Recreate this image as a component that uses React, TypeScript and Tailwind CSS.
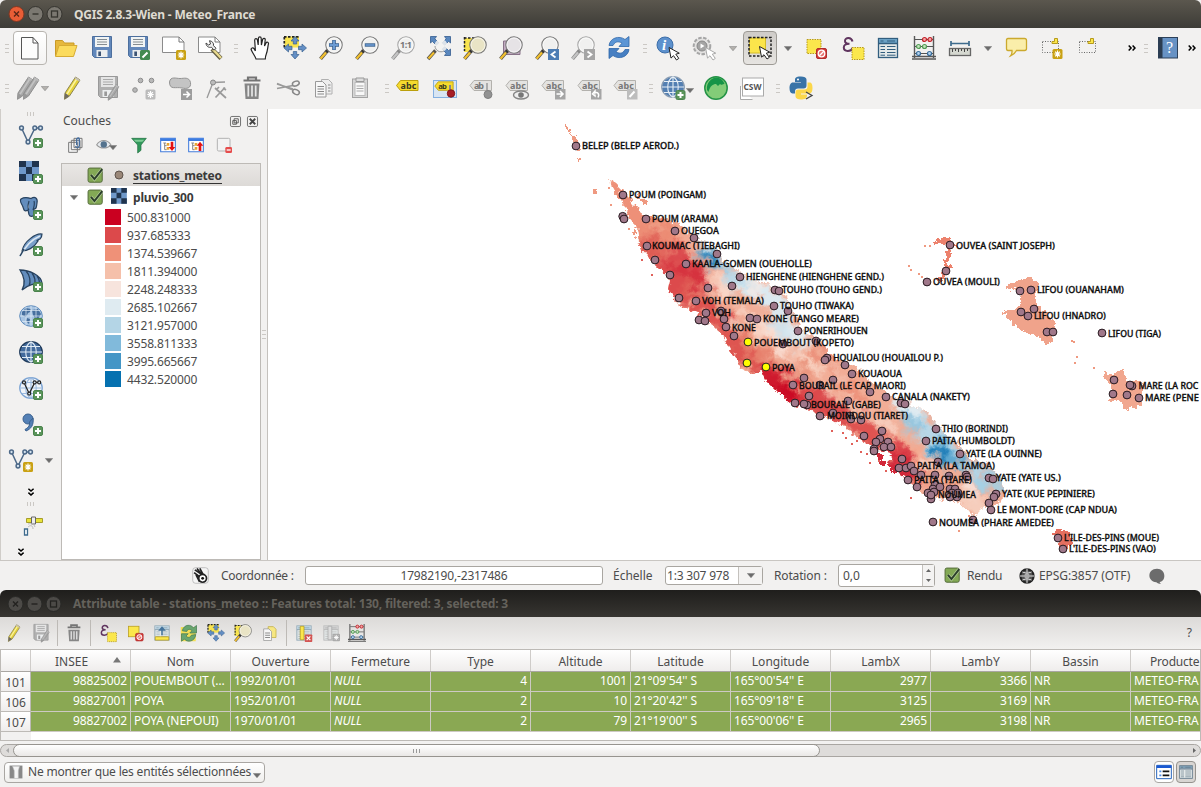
import React from "react";

type Kids = { children?: React.ReactNode };

function Icon({ children, size = 24 }: Kids & { size?: number }) {
  return (
    <svg width={size} height={size} viewBox="0 0 24 24" fill="none" className="block shrink-0 overflow-visible">
      {children}
    </svg>
  );
}

function Cell({ w = "w-9", children }: Kids & { w?: string }) {
  return <div className={`flex h-full shrink-0 items-center justify-center ${w}`}>{children}</div>;
}

function Grip() {
  return (
    <svg width="4" height="9" className="block shrink-0">
      <path d="M0 .5h4M0 4.5h4M0 8.5h4" stroke="#cbc8c4" />
    </svg>
  );
}
function VGrip() {
  return (
    <svg width="8" height="4" className="block shrink-0">
      <path d="M.5 0v4M3.5 0v4M6.5 0v4" stroke="#cbc8c4" />
    </svg>
  );
}
function Down({ c = "#6b6b6b" }: { c?: string }) {
  return (
    <svg width="8" height="5" viewBox="0 0 8 5" className="block shrink-0">
      <path d="M0.3 .4h7.4L4 4.8z" fill={c} stroke="#777" strokeWidth=".5" />
    </svg>
  );
}
function More({ down = false }: { down?: boolean }) {
  return (
    <svg width="8" height="8" viewBox="0 0 8 8" className={down ? "block rotate-90" : "block"}>
      <path d="M.7 1.4 3.1 4 .7 6.6M4.6 1.4 7 4 4.6 6.6" fill="none" stroke="#000" strokeWidth="1.5" />
    </svg>
  );
}

const Plus = ({ x = 14, y = 13 }) => (
  <g transform={`translate(${x} ${y})`}>
    <rect x=".5" y=".5" width="9" height="9" rx="1.5" fill="#5b955b" stroke="#4a834c" />
    <path d="M5 2v6M2 5h6" stroke="#fff" strokeWidth="2" />
  </g>
);
const Star = ({ x = 14, y = 13, c = "#c9a113" }) => (
  <g transform={`translate(${x} ${y})`}>
    <rect width="10" height="10" rx="1.5" fill={c} />
    <path d="M5 1.5v7M1.8 5h6.4M2.6 2.6l4.8 4.8M7.4 2.6 2.6 7.4" stroke="#fff" strokeWidth="1.2" />
  </g>
);
const Cursor = ({ x = 12, y = 10, c = "#222" }) => (
  <path transform={`translate(${x} ${y})`} d="M.5.5l2 10.6 2.5-2.4 3 4.3 2.3-1.6-3-4.2 3.5-1z" fill="#fff" stroke={c} strokeWidth="1" strokeLinejoin="round" />
);
const Lens = ({ grey = false, children, fill = "#f0f0ef" }: Kids & { grey?: boolean; fill?: string }) => (
  <>
    <path d="M8.5 14.5 1.5 22.8" stroke={grey ? "#8c8c8c" : "#57534a"} strokeWidth="3.6" />
    <path d="M7 16.5 1.5 22.8" stroke={grey ? "#c4c4c4" : "#f3c12f"} strokeWidth="2.2" />
    <path d="M10 13 7.5 16" stroke={grey ? "#888" : "#333"} strokeWidth="3" />
    <circle cx="15" cy="9" r="8.2" fill={fill} stroke={grey ? "#a5a5a5" : "#777"} strokeWidth="1.1" />
    <circle cx="15" cy="9" r="7" stroke="#fff" strokeWidth=".8" opacity=".8" />
    {children}
  </>
);
const Arrows = () => (
  <g fill="#648fc5" stroke="#38608f" strokeWidth=".7">
    <path d="M12 0.5 16 5h-2.3v3h-3.4V5H8z" />
    <path d="M12 23 16 18.5h-2.3v-3h-3.4v3H8z" />
    <path d="M1 12l4.500-4v2.300H9v3.400H5.500v2.300z" />
    <path d="M23.500 12 19 8v2.300h-3.500v3.400H19V16z" />
  </g>
);
const Pencil = ({ grey = false, x = 0 }: { grey?: boolean; x?: number }) => (
  <g transform={`translate(${x} 0)`} strokeLinejoin="round">
    <path d="M15.500 1 20 4 9.500 20 4.500 23.300 5 17z" fill={grey ? "#a8a8a8" : "#e5d23b"} stroke={grey ? "#8d8d8d" : "#8b8351"} />
    <path d="M17 2.500 6.800 18.500" stroke={grey ? "#c4c4c4" : "#faf3a2"} strokeWidth="1.400" />
    <path d="M5 17l4.500 3-5 3.300z" fill={grey ? "#999" : "#706b62"} />
    <path d="M14.600 2.400l4.500 3L20 4l-4.500-3z" fill={grey ? "#bbb" : "#c6c0b3"} />
  </g>
);
const Disk = ({ grey = false }) => (
  <>
    <path d="M2.500.5h19v21h-17l-2-2z" fill={grey ? "#b0b0b0" : "#6288bb"} stroke={grey ? "#999" : "#4d6f9d"} />
    <path d="M5 1h14v10H5z" fill={grey ? "#e5e5e5" : "#f1f4f4"} />
    <path d="M7 3.500h10M7 6h10M7 8.500h10" stroke={grey ? "#aaa" : "#838b90"} strokeWidth="1.200" />
    <path d="M6.500 14h11v7h-11z" fill="#eceeef" />
    <path d="M8.300 15.500h2.700v4.500H8.300z" fill={grey ? "#999" : "#3d5474"} />
  </>
);
const VShape = ({ c = "#4d6988", dot = "#d5e3ef" }) => (
  <g stroke={c} strokeWidth="1.500" fill={dot}>
    <path d="M2.500 3 9 17 16 3h5" fill="none" />
    <circle cx="2.500" cy="3" r="1.900" />
    <circle cx="9" cy="17" r="1.900" />
    <circle cx="15.800" cy="3" r="1.900" />
    <circle cx="21.500" cy="3" r="1.900" />
  </g>
);
const Globe = ({ a = "#719bcb", b = "#1f4162", l = "#dce9f6" }) => (
  <>
    <ellipse cx="12" cy="11" rx="11.300" ry="10.300" fill={a} stroke={b} strokeWidth="1.200" />
    <path d="M1 11h22M3 5.500h18M3 16.500h18M12 .7v20.600M12 .7c-7 4-7 16.600 0 20.600M12 .7c7 4 7 16.600 0 20.600" stroke={l} strokeWidth="1.100" />
  </>
);
const Tag = ({ yellow = false, t = "abc" }) => (
  <>
    <path d="M1 9.500 5 4.500h17.500v10H5z" fill={yellow ? "#f5da2e" : "#e4e3e1"} stroke={yellow ? "#bb9f0b" : "#b3b1ad"} />
    <text x="5" y="12.500" fontSize="9" fontWeight="700" fontFamily="Noto Sans, sans-serif" fill={yellow ? "#3b3b22" : "#777"} textLength={t === "abc" ? 16 : 10}>
      {t}
    </text>
  </>
);
const Trash = () => (
  <>
    <path d="M3.500 4.500h17M8 4V1.500h8V4" stroke="#747474" strokeWidth="2.200" />
    <path d="M4.500 7.500h15l-1 15.500h-13z" fill="#868686" />
    <path d="M8.300 9.500v11M12 9.500v11M15.700 9.500v11" stroke="#e7e7e7" strokeWidth="1.700" />
  </>
);
const Check = () => (
  <Icon size={17}>
    <rect x="1.500" y="1.500" width="20" height="20" rx="2.500" fill="#83a955" stroke="#546b3b" strokeWidth="1.400" />
    <path d="M5.500 11l5 6L21.500 3" stroke="#f0f5e8" strokeWidth="4.600" opacity=".45" />
    <path d="M5.500 11l5 6L21.500 3" stroke="#2b3f2a" strokeWidth="2.800" />
  </Icon>
);
const NoSign = () => (
  <>
    <rect x="11.500" y="12.500" width="10" height="10" rx="1.500" fill="#d33a37" stroke="#b02c2c" />
    <circle cx="16.500" cy="17.500" r="3.300" fill="#e87371" stroke="#fff" strokeWidth="1.300" />
    <path d="m14.300 19.700 4.500-4.500" stroke="#fff" strokeWidth="1.300" />
  </>
);
const Epsilon = () => (
  <>
    <path d="M10.500 5.500C9.500 1 3 1 3 5c0 2 1.500 2.800 4.500 2.800C3.500 7.800 1.800 9 1.800 11.500c0 4.500 7.200 4.500 9 .5" stroke="#60355f" strokeWidth="2" />
    <rect x="10" y="11.500" width="12" height="12" fill="#fbe74c" stroke="#b69a1c" strokeDasharray="1.500 1" />
  </>
);
const Abacus = () => (
  <>
    <path d="M2.500 0v22M21.500 0v22M0 23h24M0 20.500h24" stroke="#585858" strokeWidth="1.400" />
    <path d="M3 3.500h18M3 10.500h18M3 17.500h18" stroke="#555" />
    <g strokeWidth="1.200">
      <circle cx="12.500" cy="3.500" r="2" fill="#f5a5a5" stroke="#c22129" />
      <circle cx="18" cy="3.500" r="2" fill="#f5a5a5" stroke="#c22129" />
      <circle cx="6.500" cy="10.500" r="2" fill="#c3e4bd" stroke="#519b54" />
      <circle cx="12.500" cy="10.500" r="2" fill="#c3e4bd" stroke="#519b54" />
      <circle cx="6.500" cy="17.500" r="2" fill="#b5d4ee" stroke="#396d9b" />
      <circle cx="17.500" cy="17.500" r="2" fill="#b5d4ee" stroke="#396d9b" />
    </g>
  </>
);
const TableShape = ({ c = "#325e7e", h = "#6ba2c6" }) => (
  <>
    <rect x="2.500" y="2.500" width="19" height="19" fill="#e4e9e9" stroke={c} strokeWidth="1.300" />
    <path d="M3 3h18v4H3z" fill={h} />
    <path d="M2.500 7.500h19" stroke={c} strokeWidth="1.500" />
    <path d="M4.500 10.500h4.500M4.500 13.500h4.500M4.500 16.500h4.500M4.500 19.200h4.500M11 10.500h8.500M11 13.500h8.500M11 16.500h8.500M11 19.200h8.500M4.500 5h3M11 5h8" stroke={c} />
  </>
);
const Raster = () => (
  <>
    <path d="M0 0h20v20H0z" fill="#6f98c9" />
    <path d="M0 0h7v6H0zM13 0h7v6h-7zM7 6h6v7H7zM0 13h7v7H0zM13 13h7v7h-7z" fill="#20344e" />
  </>
);

const WinButtons = ({ dim = false }: { dim?: boolean }) => (
  <svg width="56" height="16" viewBox="0 0 56 16" className="block shrink-0">
    <circle cx="8.500" cy="8" r="7.500" fill={dim ? "#4c4a47" : "#e95d36"} stroke={dim ? "#292927" : "#7f3722"} />
    <path d="m6 5.500 5 5m0-5-5 5" stroke={dim ? "#232220" : "#5a2516"} strokeWidth="1.400" />
    <circle cx="27.500" cy="8" r="7.500" fill={dim ? "#4c4a47" : "#7b7871"} stroke={dim ? "#292927" : "#35342f"} />
    <path d="M24.500 8h6" stroke={dim ? "#232220" : "#35342f"} strokeWidth="1.400" />
    <circle cx="46.500" cy="8" r="7.500" fill={dim ? "#4c4a47" : "#7b7871"} stroke={dim ? "#292927" : "#35342f"} />
    <rect x="43.500" y="5" width="6" height="6" fill="none" stroke={dim ? "#232220" : "#35342f"} strokeWidth="1.300" />
  </svg>
);

function MainToolbar() {
  return (
    <div className="flex h-10 shrink-0 pl-0.5">
      <Cell w="w-[10px]"><Grip /></Cell>
      <Cell>
        <div className="flex h-[34px] w-[34px] items-center justify-center rounded border border-[#b8b5b0] bg-gradient-to-b from-white to-[#f4f3f2]">
          <Icon><path d="M3.500 1.500h11.500l5 5.500v16H3.500z" fill="#fcfcfc" stroke="#555" /><path d="M15 1.500V7h5" stroke="#555" /></Icon>
        </div>
      </Cell>
      <Cell><Icon><path d="M1.500 20V4.500h7l2 2.500H20v4" fill="#e6b83d" stroke="#c99a26" /><path d="M1.500 20.500 5 9.500h18l-3.500 11z" fill="#fbdb5d" stroke="#d7ac34" /></Icon></Cell>
      <Cell><Icon><Disk /></Icon></Cell>
      <Cell><Icon><Disk /><rect x="14" y="14" width="10" height="10" rx="1.500" fill="#438a50" /><path d="m16.500 21.500 5-5" stroke="#fff" strokeWidth="2" /></Icon></Cell>
      <Cell><Icon><path d="M.5 1h16.500l5 5v10.500H.5z" fill="#fff" stroke="#8b8b8b" /><path d="M17 1v5h5" stroke="#777" /><Star x={14} y={14} /></Icon></Cell>
      <Cell><Icon><path d="M.5 1h16.500l5 5v10.500H.5z" fill="#fff" stroke="#8b8b8b" /><path d="M17 1v5h5" stroke="#777" /><path d="M14 13l9 9.500" stroke="#635d43" strokeWidth="4.200" /><path d="M15 13.500l8 8.500" stroke="#eadb8e" strokeWidth="2.400" /><path d="M8 7c0 3.500 3 5 5.500 4.200l2.500 3 2-2-2.500-2.500C16 7 14 5 11.500 4.700l1 3.300-2 1z" fill="#eee" stroke="#444" /></Icon></Cell>
      <Cell w="w-[15px]"><Grip /></Cell>
      <Cell w="w-[34px]">
        <Icon><path d="M8 23c-.4-2.500-3.300-5.500-4.800-9.200C2.700 12 5 11.300 6 12.700l1.400 2.200L6.700 4.500C6.500 2.300 9 2 9.400 4l.8 5 .2-6.600c.2-2 2.700-2 2.800 0l.2 6.600 1.200-5.500c.6-2 2.900-1.300 2.600.5L16.500 10l1.500-3c.8-1.600 2.900-.7 2.400 1.200-.8 3.500-.8 6.800-2.100 9.800-.8 2-1 3.500-1 5z" fill="#fff" stroke="#242424" strokeWidth="1.200" /></Icon>
      </Cell>
      <Cell><Icon><rect x="1.500" y=".5" width="14.500" height="11" fill="#f8e44f" /><path d="M1 .8h15.500M1.300 1v11" stroke="#222" strokeWidth="1.700" strokeDasharray="2.500 1.500" /><Arrows /></Icon></Cell>
      <Cell><Icon><Lens><path d="M15 4v10M10 9h10" stroke="#38608f" strokeWidth="3.600" /><path d="M15 4.600v8.800M10.600 9h8.800" stroke="#6c9bd2" strokeWidth="2" /></Lens></Icon></Cell>
      <Cell><Icon><Lens><path d="M9.800 9h10.400" stroke="#38608f" strokeWidth="3.400" /><path d="M10.500 9h9" stroke="#6c9bd2" strokeWidth="1.600" /></Lens></Icon></Cell>
      <Cell><Icon><Lens grey><text x="9" y="12" fontSize="9" fontWeight="700" fontFamily="Noto Sans, sans-serif" fill="#777" textLength="12">1:1</text></Lens></Icon></Cell>
      <Cell><Icon><path d="M3.500.5h6L7.800 2.800l4 4-2.500 2.500-4-4L3.500 7zM23.500.5h-6l1.700 2.300-4 4 2.500 2.500 4-4L23.500 7zM23.500 19.500h-6l1.700-2.300-4-4 2.500-2.500 4 4 1.800-1.700z" fill="#5987be" stroke="#355d8f" strokeWidth=".8" /><path d="M8.500 14.500 1 23" stroke="#57534a" strokeWidth="3.500" /><path d="M7 16.500 1.500 22.500" stroke="#f3c12f" strokeWidth="2" /><circle cx="14" cy="9.500" r="6.500" fill="#f3f3f2" opacity=".85" /><path d="M8 10a6 6 0 0 0 9 5" stroke="#999" /></Icon></Cell>
      <Cell><Icon><path d="M1 2h13v14H1z" fill="#f8e44f" /><path d="M1 2h13M1.500 1v14" stroke="#222" strokeWidth="1.500" strokeDasharray="2.500 1.500" /><Lens fill="#e9e4c5" /></Icon></Cell>
      <Cell><Icon><path d="M4.500 5h16.500v13.500H4.500z" fill="#c1abc1" stroke="#887288" /><Lens fill="#e6e3e6" /></Icon></Cell>
      <Cell><Icon><Lens /><rect x="13" y="13" width="11" height="11" fill="#4d7db4" /><path d="m20.500 15.500-4 3 4 3" stroke="#fff" strokeWidth="1.800" /></Icon></Cell>
      <Cell><Icon><Lens grey /><rect x="13" y="13" width="11" height="11" fill="#a5a5a5" /><path d="m16.500 15.500 4 3-4 3" stroke="#fff" strokeWidth="1.800" /></Icon></Cell>
      <Cell><Icon><path d="M2 9.500C3 2 12-1 18 3.500L22 .5v10H12l3-3.300c-4-2.500-7-1.500-9 2.300z" fill="#5b95d5" stroke="#2e67aa" strokeWidth=".8" /><path d="M22 13.500c-1 7.500-10 10.500-16 6l-4 3v-10h10l-3 3.300c4 2.500 7 1.500 9-2.300z" fill="#477fc2" stroke="#2e67aa" strokeWidth=".8" /></Icon></Cell>
      <Cell w="w-[15px]"><Grip /></Cell>
      <Cell w="w-8"><Icon><circle cx="9" cy="9" r="8" fill="#5d91cd" stroke="#3c6ea9" /><text x="6" y="14" fontSize="15" fontStyle="italic" fontWeight="700" fontFamily="Liberation Serif, serif" fill="#fff">i</text><Cursor x={12.500} y={11} /></Icon></Cell>
      <Cell w="w-10"><Icon><circle cx="10" cy="10" r="8.300" fill="#e3e2e1" stroke="#a5a5a5" strokeWidth="2" strokeDasharray="3.500 1.500" /><circle cx="10" cy="10" r="5" fill="#a5a5a5" stroke="#888" /><path d="M8.500 7.500v5l4-2.500z" fill="#fff" /><Cursor x={13} y={11} c="#aaa" /></Icon></Cell>
      <Cell w="w-[17px]"><Down c="#b4b1ad" /></Cell>
      <Cell w="w-[38px]">
        <div className="flex h-[34px] w-[34px] items-center justify-center rounded border border-[#9d9a95] bg-gradient-to-b from-[#cfccc8] to-[#e6e4e1]">
          <Icon><rect x="1.500" y="2" width="16" height="15" fill="#fbe54b" stroke="#d5bc2b" /><path d="M1 1.500h22V20H1z" stroke="#222" strokeWidth="1.500" strokeDasharray="2.500 1.500" /><Cursor x={11} y={10} /></Icon>
        </div>
      </Cell>
      <Cell w="w-[18px]"><Down /></Cell>
      <Cell w="w-10"><Icon><rect x="2" y="3.500" width="14" height="14" fill="#fbe74c" stroke="#b69a1c" strokeDasharray="1.500 1" /><NoSign /></Icon></Cell>
      <Cell w="w-[33px]"><Icon><Epsilon /></Icon></Cell>
      <Cell><Icon><TableShape /></Icon></Cell>
      <Cell><Icon><Abacus /></Icon></Cell>
      <Cell><Icon><path d="M3 7.500h18M3 5v5M21 5v5" stroke="#3e6b8d" strokeWidth="1.700" /><rect x="1.500" y="12.500" width="21" height="7" fill="#d5d8d0" stroke="#666" strokeWidth="1.300" /><path d="M4.500 13v3M7.500 13v2M10.500 13v3M13.500 13v2M16.500 13v3M19.500 13v2" stroke="#444" /></Icon></Cell>
      <Cell w="w-5"><Down /></Cell>
      <Cell><Icon><path d="M4 2.500h16.500q2 0 2 2v8q0 2-2 2H12.500c-1 2-2.500 4-6 5.500 1.500-2 1.700-3.500 1.500-5.500H4q-1.500 0-1.500-2v-8q0-2 1.500-2z" fill="#faeeaa" stroke="#cba92d" strokeWidth="1.300" /></Icon></Cell>
      <Cell><Icon><rect x="2.500" y="5.500" width="16" height="11" stroke="#666" strokeDasharray="1 1.500" /><path d="M12 7.500V5.500h2.500V2.500h3v5z" fill="#fbe74c" stroke="#b69a1c" /><Star x={12.500} y={13} /></Icon></Cell>
      <Cell><Icon><rect x="3.500" y="5.500" width="16" height="11" stroke="#666" strokeDasharray="1 1.500" /><path d="M12 7.500V5.500h2.500V2.500h3v5z" fill="#fbe74c" stroke="#b69a1c" /></Icon></Cell>
      <Cell w="w-[19px]" />
      <Cell w="w-[14px]"><More /></Cell>
      <Cell w="w-[13px]"><Grip /></Cell>
      <Cell w="w-8"><Icon><rect x="2.500" y="1.500" width="19" height="20.500" fill="#6792c4" stroke="#2c4059" /><path d="M2.500 1.500h4V22h-4z" fill="#2b3c51" /><text x="10" y="17" fontSize="16" fontFamily="Liberation Serif, serif" fill="#fff">?</text></Icon></Cell>
      <Cell w="w-[16px]"><More /></Cell>
    </div>
  );
}

function EditToolbar() {
  return (
    <div className="flex h-10 shrink-0 pl-0.5">
      <Cell w="w-[10px]"><Grip /></Cell>
      <Cell w="w-[28px]"><Icon><g transform="translate(5 0)"><Pencil grey x={-6} /><Pencil grey x={0} /></g></Icon></Cell>
      <Cell w="w-[10px]"><Down c="#b4b1ad" /></Cell>
      <Cell w="w-1" />
      <Cell><Icon><Pencil /></Icon></Cell>
      <Cell><Icon><Disk grey /><g transform="translate(9 8) scale(.7)"><Pencil grey /></g></Icon></Cell>
      <Cell><Icon><g fill="#b8b8b8" stroke="#8d8d8d"><circle cx="8.500" cy="4.500" r="2.300" /><circle cx="19.500" cy="4.500" r="2.300" /><circle cx="3" cy="14" r="2.300" /></g><Star x={13.500} y={13.500} c="#bbb" /></Icon></Cell>
      <Cell><Icon><path d="M1.500 6C2.500 0 8 2.500 12 2.500s9-2 10.500 4c.8 6-4 6.500-8.500 5.500C8 10.500 1.500 14.500 1.500 6z" fill="#c4c4c4" stroke="#939393" /><rect x="13" y="13" width="11" height="11" fill="#9d9d9d" /><path d="M15 18.500h6M18.500 15.500l3 3-3 3" stroke="#fff" strokeWidth="1.600" /></Icon></Cell>
      <Cell><Icon><path d="M3 22 9 6.500 21 6" stroke="#999" strokeWidth="1.300" /><circle cx="9" cy="6.500" r="2.500" fill="#bbb" stroke="#888" /><path d="M11 12l11 10M21 11.500 11.500 21.500M12 14l3-3M19 12l3 2" stroke="#9a9a9a" strokeWidth="1.700" /></Icon></Cell>
      <Cell><Icon><Trash /></Icon></Cell>
      <Cell><Icon><path d="M1 7.500l16 6.500M1 12.500 17 9.500M1 8l16 5" stroke="#999" strokeWidth="1.700" /><ellipse cx="20" cy="7.500" rx="3.500" ry="2.300" stroke="#888" strokeWidth="1.500" transform="rotate(-20 20 8)" /><ellipse cx="20" cy="16" rx="3.500" ry="2.300" stroke="#888" strokeWidth="1.500" transform="rotate(25 20 16)" /></Icon></Cell>
      <Cell><Icon><path d="M9.500 3.500h7l3.500 3.500v11H9.500z" fill="#eee" stroke="#b0b0b0" /><path d="M3.500 5.500h7l3.500 3.500v12H3.500z" fill="#f7f7f7" stroke="#999" /><path d="M5.500 10.500h6.500M5.500 13h6.500M5.500 15.500h6.500M5.500 18h6.500M16 9h2.500M16 12h2.500M16 15h2.500" stroke="#888" /></Icon></Cell>
      <Cell><Icon><rect x="4.500" y="3" width="15" height="18.500" fill="#d7d7d7" stroke="#a3a3a3" /><rect x="7" y="6.500" width="10" height="13" fill="#f8f8f8" stroke="#bbb" /><path d="M8 2h8v3.500H8z" fill="#ddd" stroke="#999" /><path d="M8.500 10h7M8.500 12.500h7M8.500 15h7" stroke="#aaa" /></Icon></Cell>
      <Cell w="w-1" />
      <Cell w="w-[9px]"><Grip /></Cell>
      <Cell><Icon><g transform="translate(-1.500 0)"><Tag yellow /></g></Icon></Cell>
      <Cell><Icon><rect x=".5" y="4.500" width="23" height="17" fill="#d8e5f3" stroke="#83afe0" /><g transform="translate(1 2) scale(.85)"><Tag yellow t="ab" /></g><path d="M17 9v8" stroke="#888" strokeWidth="2" /><circle cx="18" cy="17.500" r="3.700" fill="#a71d26" stroke="#80151b" /></Icon></Cell>
      <Cell><Icon><Tag t="ab" /><path d="M18 7v9" stroke="#999" strokeWidth="1.500" /><circle cx="19" cy="18.500" r="4" fill="#929292" stroke="#7f7f7f" /></Icon></Cell>
      <Cell><Icon><Tag /><ellipse cx="16" cy="19" rx="7.500" ry="4" fill="#eee" stroke="#858585" strokeWidth="1.400" /><circle cx="16" cy="19" r="2.800" fill="#777" /></Icon></Cell>
      <Cell><Icon><Tag /><rect x="14" y="13" width="10.500" height="10.500" fill="#a5a5a5" /><path d="M15.500 18h6M19 15l3 3-3 3" stroke="#fff" strokeWidth="1.600" /></Icon></Cell>
      <Cell><Icon><Tag /><rect x="14" y="13" width="10.500" height="10.500" fill="#a5a5a5" /><path d="M21 21.500c2-4-1-6-3-4.500v-2l-2.500 3 2.500 2v-1.500" stroke="#fff" strokeWidth="1.500" /></Icon></Cell>
      <Cell><Icon><Tag /><rect x="14" y="13" width="10.500" height="10.500" fill="#bdbdbd" /><path d="m16.500 21 5-5.500" stroke="#fff" strokeWidth="2" /></Icon></Cell>
      <Cell w="w-1" />
      <Cell w="w-2"><Grip /></Cell>
      <Cell w="w-1" />
      <Cell w="w-[27px]"><Icon><Globe a="#537fb2" b="#8a9db3" l="#e6eef5" /><Plus x={14.500} y={14} /></Icon></Cell>
      <Cell w="w-2 pt-[5px]"><Down /></Cell>
      <Cell w="w-1" />
      <Cell><Icon><circle cx="12" cy="12" r="11.200" fill="#83cc78" stroke="#249347" strokeWidth="1.500" /><path d="M3 14C2 6 8 2 12 1.500c4.500 0 7.500 3 8.500 6.500-2-.5-3 2-4.500 0l-2 2-2-2C9 8 6 10 4.500 16z" fill="#169447" /></Icon></Cell>
      <Cell><Icon><path d="M.5 10v13.500h12" stroke="#aaa" fill="#fff" /><rect x="2.500" y="2" width="21" height="18" fill="#fff" stroke="#aaa" /><text x="3.500" y="14" fontSize="9" fontWeight="700" fontFamily="Noto Sans, sans-serif" fill="#555" textLength="18" lengthAdjust="spacingAndGlyphs">CSW</text></Icon></Cell>
      <Cell w="w-1" />
      <Cell w="w-2"><Grip /></Cell>
      <Cell w="w-[38px]"><Icon><path d="M6 6V3.500C6 1 9 .5 12 .5s5.500 1 5.500 3v6c0 2-1 3-3 3H9c-2 0-3 1-3 3v2H3.500c-2 0-3-2.500-3-5.500s1-5.500 3.500-5.500H12V6z" fill="#3873a7" /><path d="M18.500 6.500h2c2.500 0 3 2.500 3 5.500s-1 5.500-3 5.500H12v1h6V20c0 2.500-3 3.500-6 3.500s-5.500-1-5.500-3v-4c0-2 1-3 3-3h6c2 0 3-1 3-3z" fill="#fbd74a" /><circle cx="9" cy="3.500" r="1" fill="#fff" /><path d="m17 16 6 3.500-6 3.500" stroke="#444" strokeWidth="1.300" /></Icon></Cell>
    </div>
  );
}

const sources: React.ReactNode[] = [
  <VShape />,
  <Raster />,
  <path d="M2 2C6-.5 10 1 12 1.500 16-1 19 1 18 6c-.5 5-1 6-3 6v6c-1 2-4 2-5-.5L9 13c-4 2-4 0-5-3S0 4 2 2zM10 4c-1 4-2 7 0 9M15 4c1 3 0 6-1 9" fill="#638dbd" stroke="#27425f" strokeWidth="1.200" />,
  <><path d="M23 1C17 0 5 8 3 18c5 0 12-3 16-10-2 0-1-1 2-2 1.500-1.500 2-3 2-5z" fill="#7aa0cb" stroke="#27425f" strokeWidth="1.200" /><path d="M21 3C14 6 6 13 1 24" stroke="#dce8f3" strokeWidth="1.500" /><path d="M5 16 1 23" stroke="#27425f" strokeWidth="1.500" /></>,
  <path d="M1 1c9 0 21 5 22 13-6 0-15 2-20 7C7 14 5 7 1 1zM7 2c4 4 5 11 3 15M13 4c3 4 4 9 2 11M18 7c2 3 3 5 2 7" fill="#638dbd" stroke="#27425f" strokeWidth="1.300" />,
  <><ellipse cx="12" cy="11" rx="11.300" ry="10.300" fill="#a9c5e2" stroke="#5f8cbd" /><path d="M3 7l4-4 5 1-1 3-2 1-2 4-4-2zM13 5l6-1 3 5-3 5-3-1-2-3zM8 13l3 1-1 5-3-3zM15 15l3 1-1 3z" fill="#47709f" /><path d="M1 11h22M3 5.500h18M3 16.500h18M7 2v18M12 .7v20.600M17 2v18" stroke="#e2ecf6" strokeWidth=".7" /></>,
  <Globe a="#426a9c" b="#1f3a5a" l="#e0ebf5" />,
  <><Globe a="#f0f4f9" b="#7ba3d3" l="#9ab9de" /><g transform="translate(3 3) scale(.8)"><VShape c="#222" /></g></>,
  <><circle cx="9" cy="6" r="5" fill="#5480b5" stroke="#3a618f" /><path d="M14 5c1 7-2 11-7 13l-1-1.500C10 14 11 12 10.500 9z" fill="#5480b5" stroke="#3a618f" /></>,
];

function SideToolbar() {
  return (
    <div className="flex w-[61px] shrink-0 flex-col items-center border-l border-[#d0cdc9]">
      <div className="flex h-[11px] items-center"><VGrip /></div>
      {sources.map((s, i) => (
        <div key={i} className="flex h-9 shrink-0 items-center"><Icon>{s}<Plus /></Icon></div>
      ))}
      <div className="flex h-9 w-full items-center gap-3 pt-px pl-2"><Icon><VShape /><Star /></Icon><Down /></div>
      <div className="mt-[5px] flex h-5 items-center"><More down /></div>
      <div className="flex h-[6px] items-center"><VGrip /></div>
      <div className="mt-[4px] flex h-8 items-center pl-1"><Icon><path d="M5.500 4.500h16v4h-16z" fill="#e8e33a" stroke="#a69d2b" /><path d="M10.500 3h4v7h-4z" fill="#eee" stroke="#666" /><path d="M3.500 15h3v6h-3z" fill="#fff" stroke="#3e6b8d" strokeWidth="1.300" /><path d="M7 13c2-2 5-2 5 2M7 10c4-1 6 0 7 3" stroke="#bbb" /></Icon></div>
      <div className="mt-[4px] flex h-4 w-full items-center pl-[16px]"><More down /></div>
    </div>
  );
}

const classes: [string, string][] = [
  ["bg-[#ca0020]", "500.831000"],
  ["bg-[#dc494b]", "937.685333"],
  ["bg-[#ef9178]", "1374.539667"],
  ["bg-[#f5c0aa]", "1811.394000"],
  ["bg-[#f7e4dd]", "2248.248333"],
  ["bg-[#dfebf1]", "2685.102667"],
  ["bg-[#b4d5e6]", "3121.957000"],
  ["bg-[#81badb]", "3558.811333"],
  ["bg-[#4496c6]", "3995.665667"],
  ["bg-[#0571b0]", "4432.520000"],
];

function LayersPanel() {
  return (
    <div className="flex w-[200px] shrink-0 flex-col">
      <div className="flex h-6 items-center justify-between pr-[3px] pl-[2px]">
        <span>Couches</span>
        <span className="flex gap-[6px]">
          <Icon size={11}><rect x="1" y="1" width="22" height="22" rx="3" stroke="#666" strokeWidth="2" /><path d="M9 6h9v9H9zM6 10h8v8H6z" stroke="#555" strokeWidth="2" /></Icon>
          <Icon size={11}><rect x="1" y="1" width="22" height="22" rx="3" stroke="#666" strokeWidth="2" /><path d="m6 6 12 12M18 6 6 18" stroke="#444" strokeWidth="4" /></Icon>
        </span>
      </div>
      <div className="flex h-[30px] items-center pb-[6px] pl-[6px]">
        <Cell w="w-[18px]"><Icon size={16}><path d="M1 8h13v15H1zM5 5h13v14H5zM9 2h12v14H9z" fill="#f5f5f5" stroke="#777" strokeWidth="1.500" /><path d="M13 12V3q3-3 4 0v10q-2 5-6 1" stroke="#476f9f" strokeWidth="2" /></Icon></Cell>
        <Cell w="w-[24px] pl-[14px]"><Icon size={17}><path d="M1 11C6 3 16 3 21 11 16 17 6 17 1 11z" fill="#e7ebef" stroke="#999" strokeWidth="1.500" /><circle cx="11" cy="10.500" r="4.500" fill="#55738e" /></Icon></Cell>
        <Cell w="w-[8px] pt-[5px]"><Down /></Cell>
        <Cell w="w-[44px]"><Icon size={16}><path d="M1 2h22l-8 10v8l-5 4V12z" fill="#31985b" stroke="#1c6d3d" /><path d="M4 4h16l-3 3H7z" fill="#7dcc95" /></Icon></Cell>
        {[0, 1].map((n) => (
          <Cell key={n} w={n ? "w-[42px]" : "w-[14px]"}><Icon size={16}><path d="M1 2h22v20H1z" fill="#fff" stroke="#447edc" strokeWidth="1.600" /><path d="M1 2h22v4H1z" fill="#3c7be1" /><path d="M5 9h4M7 9v10h3M7 13h3" stroke="#888" strokeWidth="1.500" /><path d="M10 9h4v4h-4zM10 15h4v4h-4z" fill="#e7a532" /><path d={n ? "M16 21V13h-3l5-6 5 6h-3v8z" : "M16 7v8h-3l5 6 5-6h-3V7z"} fill="#e41212" /></Icon></Cell>
        ))}
        <Cell w="w-[14px]"><Icon size={16}><rect x="2" y="2" width="19" height="19" rx="2" fill="#f3f3f3" stroke="#b2b2b2" strokeWidth="1.500" /><rect x="14" y="15" width="10" height="9" rx="2" fill="#e54c4c" /><path d="M16 19.500h6" stroke="#fff" strokeWidth="2" /></Icon></Cell>
      </div>
      <div className="flex flex-1 flex-col border border-[#bdbab6] bg-white">
        <div className="flex h-[22px] items-center bg-gradient-to-b from-[#e9e7e5] to-[#dddad7] pl-[25px]">
          <Check />
          <svg width="29" height="12"><circle cx="15" cy="6" r="4" fill="#9a8778" stroke="#5e534c" /></svg>
          <b className="mt-[2px] border-b border-[#333] leading-[14px] tracking-[-0.25px] text-[#3a3a3a]">stations_meteo</b>
        </div>
        <div className="flex h-[22px] items-center pl-[8px]">
          <Down /><span className="w-[9px]" />
          <Check />
          <span className="flex w-[29px] justify-center pl-[3px]"><Icon size={19}><Raster /></Icon></span>
          <b className="pt-[2px] tracking-[-0.2px] text-[#3a3a3a]">pluvio_300</b>
        </div>
        {classes.map(([c, v]) => (
          <div key={v} className="flex h-[18px] items-center pl-[43px]">
            <span className={`mr-[6px] h-4 w-4 ${c}`} /><span className="pt-[2px] tracking-[-0.15px]">{v}</span>
          </div>
        ))}
      </div>
    </div>
  );
}

const stations: number[][] = [
  [576,146],[623,195],[622.7,216.300],[624,219],[646,219],[675,231],[694,238],[647,246],[655,260],[717,254],[686,264],[670,275],[740,277],[708,288],[732,286],[775,290],[779,291],[679,298],[696,301],[774,306],[788,311],[706,313],[721,311],[699,320],[705,321],[724,319],[750,318],[757,319],[726,327],[798,331],[734,336],[783,344],[816,341],[827,358],[825,360],[845,365],[852,374],[804,378],[833,380],[820,385],[793,385],[870,392],[809,396],[795,403],[807,405],[804,404],[848,401],[820,416],[833,413],[886,397],[901,403],[905,404],[850,416],[851,419],[861,420],[882,431],[864,436],[880,439],[876,442],[888,442],[884,447],[891,447],[874,449],[874,451],[936,429],[926,441],[960,454],[938,462],[902,459],[899,468],[906,468],[911,466],[914,471],[921,475],[908,480],[935,475],[949,476],[966,475],[967,477],[989,478],[993,479],[917,487],[935,485],[933,489],[940,487],[950,489],[955,489],[928,493],[934,492],[931,499],[931,495],[952,493],[950,497],[957,497],[958,493],[996,494],[994,497],[989,503],[991,510],[933,522],[973,520],[1058,538],[1063,549],[950,245],[946,271],[927,282],[1020,291],[1031,290],[1034,309],[1021,312],[1028,316],[1047,332],[1053,332],[1102,333],[1114,380],[1132,386],[1130,385],[1113,394],[1127,395],[1139,398],
];
const selected: number[][] = [[748,342],[747,363],[766,367]];

const labels: [number, number, number, string][] = [
  [582,146,97,"BELEP (BELEP AEROD.)"],[629,195,77,"POUM (POINGAM)"],[652,219,66,"POUM (ARAMA)"],[681,231,38,"OUEGOA"],[652,246,88,"KOUMAC (TIEBAGHI)"],[692,264,120,"KAALA-GOMEN (OUEHOLLE)"],[746,277,138,"HIENGHENE (HIENGHENE GEND.)"],[782,290,100,"TOUHO (TOUHO GEND.)"],[780,306,74,"TOUHO (TIWAKA)"],[702,301,62,"VOH (TEMALA)"],[712,313,19,"VOH"],[763,319,96,"KONE (TANGO MEARE)"],[732,327.5,24,"KONE"],[804,331,64,"PONERIHOUEN"],[754,342.5,100,"POUEMBOUT (KOPETO)"],[772,367.5,23,"POYA"],[833,358,110,"HOUAILOU (HOUAILOU P.)"],[858,374,44,"KOUAOUA"],[799,385.5,107,"BOURAIL (LE CAP MAORI)"],[892,397,78,"CANALA (NAKETY)"],[811,405,70,"BOURAIL (GABE)"],[827,416,81,"MOINDOU (TIARET)"],[942,429,66,"THIO (BORINDI)"],[932,441,83,"PAITA (HUMBOLDT)"],[966,454,76,"YATE (LA OUINNE)"],[917,466,78,"PAITA (LA TAMOA)"],[914,480,58,"PAITA (TIARE)"],[996,478,65,"YATE (YATE US.)"],[1002,494,93,"YATE (KUE PEPINIERE)"],[938,495,38,"NOUMEA"],[997,510,120,"LE MONT-DORE (CAP NDUA)"],[939,522.5,115,"NOUMEA (PHARE AMEDEE)"],[1064,538,95,"L'ILE-DES-PINS (MOUE)"],[1069,549,87,"L'ILE-DES-PINS (VAO)"],[956,245.5,99,"OUVEA (SAINT JOSEPH)"],[933,282,67,"OUVEA (MOULI)"],[1037,290,87,"LIFOU (OUANAHAM)"],[1034,316,72,"LIFOU (HNADRO)"],[1108,333.5,53,"LIFOU (TIGA)"],[1138.5,386,60,"MARE (LA ROC"],[1145,398,54,"MARE (PENE"],
];

const mainland = "M609 180 616 184 622 190 629 198 637 208 643 216 655 216 673 221 683 227 693 237 707 244 717 251 727 264 740 272 757 281 773 286 787 297 790 311 798 321 807 334 822 342 828 354 845 363 860 370 868 380 880 388 893 397 907 402 927 412 936 423 947 436 960 446 970 459 990 465 1000 476 1004 489 1002 502 993 507 983 507 973 516 964 506 953 499 937 498 923 494 913 483 900 474 888 464 893 454 877 449 860 439 847 428 833 420 820 415 803 407 790 402 777 392 765 380 761 371 753 373 740 369 737 358 729 347 722 334 710 324 707 319 693 312 677 303 668 290 670 280 660 269 649 258 642 250 636 239 640 230 632 222 625 207 617 194z";
const lifou = "M1005 287 1012 282 1022 281 1026 276 1035 280 1039 285 1036 292 1037 305 1048 314 1054 323 1059 327 1053 333 1053 341 1046 345 1040 338 1026 332 1017 327 1008 320 1002 310 1013 311 1021 305 1023 295 1020 288 1011 290z";
const mare = "M1103 372 1112 375 1125 368 1123 374 1127 380 1144 384 1139 400 1141 407 1132 408 1126 410 1121 402 1109 401 1112 388 1106 379z";

// [cx, cy, rx, ry, fill, opacity]; ellipses lie along the island's axis
const patches: [number, number, number, number, string, number][] = [
  [635,212,44,26,"#ee9078",1],[668,240,32,15,"#ec8b73",1],[652,250,16,12,"#df5d54",1],
  [686,272,36,17,"#dc4d50",1],[684,272,24,9,"#d6333f",1],[672,285,26,12,"#dc4a4c",1],[706,306,32,12,"#de5350",1],[738,350,32,13,"#de5550",1],
  [785,390,36,13,"#d93a40",1],[780,388,24,8,"#ca0a24",1],[768,377,14,11,"#cf1c30",.9],[830,410,32,11,"#dc4a4c",1],[870,436,30,11,"#df5350",1],[903,468,26,11,"#d2283a",1],[900,453,14,8,"#db4048",1],
  [758,352,24,8,"#e77f6b",.9],[800,372,27,6,"#e9907a",.85],[728,308,28,7,"#f0a28b",.9],[692,243,24,7,"#f2ab95",1],[850,390,30,7,"#ec8d76",.9],[826,356,16,6,"#e98470",.8],
  [722,288,16,9,"#f8d8ca",.95],[712,278,12,4,"#f5c0ac",.9],[768,333,26,7,"#f9dfd4",.95],[748,318,18,6,"#f7cfbf",.9],[735,328,10,4,"#f8d8ca",.7],[784,352,14,4,"#f9dfd4",.9],[810,362,18,4,"#f8d8ca",.9],[838,376,12,3,"#f8d3c4",.8],[860,410,22,5,"#f6c8b6",.85],[830,392,12,3,"#f7cdbb",.8],[888,424,10,6,"#f8d5c7",.8],
  [757,287,26,9,"#efe9e7",1],[775,303,22,11,"#dce9f0",1],[795,335,18,9,"#e2ebef",1],[780,328,14,8,"#cfe3ed",.9],
  [706,243,10,6,"#dbe9f1",1],[716,259,20,8,"#a9d0e4",1],[712,257,13,5,"#4f9dca",1],[711,257,8,3.500,"#1473b2",1],[735,278,16,7,"#bbdaea",1],[742,290,12,4,"#deebf1",.9],
  [912,412,24,10,"#dfebf1",1],[935,440,32,16,"#b8d8e8",1],[912,424,14,6,"#92c5df",.9],[944,452,18,10,"#60a9d1",1],[940,452,9,5,"#1a7ab6",1],[960,465,14,7,"#5fa8d0",1],[978,473,16,8,"#b4d5e6",1],[992,482,14,12,"#a4cfe3",.9],
  [915,448,14,9,"#f3a88f",.9],[930,468,15,5,"#f7d3c4",.9],[942,486,20,8,"#ee9c84",1],[972,502,20,10,"#f6cdbc",1],[972,490,11,5,"#f8e3dc",1],
  [698,290,7,4,"#ee9880",.8],[663,252,8,4,"#e77c69",.7],[676,262,5,3,"#ea8570",.8],[700,272,6,9,"#d42c3b",.7],[690,285,7,3,"#e4705f",.7],[656,230,8,5,"#f0a18a",.9],
];

function MapCanvas() {
  return (
    <svg width="933" height="451" viewBox="268 109 933 451" className="block shrink-0 bg-white">
      <defs>
        <clipPath id="land"><path d={mainland} /></clipPath>
        <filter id="cloud" x="-5%" y="-5%" width="110%" height="110%" colorInterpolationFilters="sRGB">
          <feGaussianBlur stdDeviation="2.400" result="b" />
          <feTurbulence type="fractalNoise" baseFrequency="0.080" numOctaves="3" seed="7" result="n" />
          <feDisplacementMap in="b" in2="n" scale="28" xChannelSelector="R" yChannelSelector="G" result="d" />
          <feGaussianBlur in="d" stdDeviation="0.900" />
        </filter>
        <filter id="coast" x="-5%" y="-5%" width="110%" height="110%" colorInterpolationFilters="sRGB">
          <feTurbulence type="fractalNoise" baseFrequency="0.200" numOctaves="3" seed="3" result="n" />
          <feDisplacementMap in="SourceGraphic" in2="n" scale="8" xChannelSelector="R" yChannelSelector="G" />
        </filter>
      </defs>
      <g filter="url(#coast)" shapeRendering="crispEdges">
        <g clipPath="url(#land)">
          <rect x="590" y="160" width="430" height="380" fill="#f2ad96" />
          <g filter="url(#cloud)">
            <rect x="560" y="140" width="480" height="420" fill="#f2ad96" />
            {patches.map(([x, y, rx, ry, c, o], i) => (
              <ellipse key={i} cx={x} cy={y} rx={rx} ry={ry} fill={c} opacity={o} transform={`rotate(42 ${x} ${y})`} />
            ))}
          </g>
        </g>
        <path d={lifou} fill="#f0a38b" />
        <path d={mare} fill="#f1a78f" />
        <path d="M565 122l4 6 2 5-4-3zM570 133l5 5 6 14-5-4-2-8zM577 158h3v3h-3zM591 189l7-1-1 5-4 1zM637 193l11 9-2 3-9-8zM633 228l4 4-5 2z" fill="#ef9980" />
        <path d="M938 239l11-3 2 6 7 4-6 2-4 16 3 3-4 6-6 8-7 1 8-7 2-8 4-21-9-3zM933 243l5-3 2 1-6 4z" fill="#ec816c" />
        <path d="M1054 532l6-4 10 6 2 7-5 9-6-2-6-8z" fill="#e46f60" />
        <path d="M877 451l6 4-3 4 7 3-5 5-4-9zM888 464l12 4-2 5-8-3z" fill="#d2283a" />
      </g>
      <g fill="#e0615a" shapeRendering="crispEdges">
        {[[641,259],[651,274],[831,430],[842,432],[851,443],[860,451],[866,453],[869,462],[878,460],[885,470],[890,460],[896,468],[845,437],[856,440],[910,497]].map(([x, y]) => <rect key={`${x}-${y}`} x={x} y={y} width="1.500" height="1.500" />)}
        <g fill="#ef9980">
          {[[610,204],[608,187],[628,228],[633,233],[614,193],[579,158],[924,245],[929,245],[908,265],[910,269],[918,273],[921,276],[1071,340],[1073,341],[1076,356],[1074,362],[1093,367],[958,530],[850,380],[968,515]].map(([x, y]) => <rect key={`${x}-${y}`} x={x} y={y} width="2" height="2" />)}
        </g>
      </g>
      <g fill="#a0788a" stroke="#27191f" strokeWidth="1">
        {stations.map(([x, y], i) => <circle key={i} cx={x} cy={y} r="3.900" />)}
      </g>
      <g fill="#ffff00" stroke="#222" strokeWidth="1">
        {selected.map(([x, y]) => <circle key={x} cx={x} cy={y} r="3.900" />)}
      </g>
      <g fontFamily="Noto Sans, Open Sans, sans-serif" fontSize="9" fontWeight="500" fill="#0b0b0b" stroke="#0b0b0b" strokeWidth=".32">
        {labels.map(([x, y, w, t]) => <text key={t} x={x - 0.1} y={y + 3.300} textLength={w} lengthAdjust="spacingAndGlyphs">{t}</text>)}
      </g>
    </svg>
  );
}

function StatusBar() {
  return (
    <div className="flex h-[30px] shrink-0 items-center border-t border-[#c9c6c2] pl-[192px]">
      <Icon size={17}><rect x="1" y="1" width="22" height="22" rx="4" fill="#f5f5f5" stroke="#aaa" /><path d="M4 4l9 6M3 8l8 6M11 2l5 9M7 2l7 9" stroke="#222" strokeWidth="2.400" /><path d="M6 11l5 10" stroke="#222" strokeWidth="3" /><circle cx="15" cy="16" r="5.500" fill="#fff" stroke="#222" strokeWidth="2.400" /><circle cx="15" cy="16" r="2" fill="#111" /></Icon>
      <span className="ml-3 w-[84px] tracking-[-0.3px]">Coordonnée :</span>
      <div className="flex h-[19px] w-[298px] items-center justify-center rounded-[3px] border border-[#a9a6a1] bg-white tracking-[-0.18px]">17982190,-2317486</div>
      <span className="ml-[10px] w-[52px]">Échelle</span>
      <div className="flex h-[19px] w-[98px] items-center rounded-[3px] border border-[#a9a6a1] bg-white">
        <span className="w-[72px] pl-px tracking-[-0.2px] whitespace-nowrap">1:3 307 978</span>
        <span className="flex h-full flex-1 items-center justify-center border-l border-[#c4c1bd] bg-[#f4f3f2]"><Down /></span>
      </div>
      <span className="ml-[11px] w-[64px] tracking-[-0.15px] whitespace-nowrap">Rotation :</span>
      <div className="flex h-[23px] w-[97px] items-center rounded-[3px] border border-[#a9a6a1] bg-white">
        <span className="flex-1 pl-1">0,0</span>
        <span className="flex h-full w-3 flex-col items-center justify-around border-l border-[#c4c1bd] bg-[#f4f3f2]">
          <svg width="5" height="3"><path d="M0 3h5L2.500 0z" fill="#666" /></svg>
          <svg width="5" height="3"><path d="M0 0h5L2.500 3z" fill="#666" /></svg>
        </span>
      </div>
      <span className="ml-[9px]"><Check /></span>
      <span className="ml-[6px] w-[52px] tracking-[-0.25px]">Rendu</span>
      <Icon size={16}><circle cx="12" cy="12" r="10" fill="#555" stroke="#222" strokeWidth="3" /><path d="M12 1v22M1 12h22M5 6q7 4 14 0M5 18q7-4 14 0" stroke="#ddd" strokeWidth="1.500" /><circle cx="12" cy="12" r="4" fill="#aaa" /></Icon>
      <span className="ml-[4px] w-[110px] tracking-[-0.08px] whitespace-nowrap">EPSG:3857 (OTF)</span>
      <Icon size={16}><path d="M12 1c14 0 14 19 4 20 0 1 1 2 2 3-3 0-5-1-7-2.500C-3 20-3 1 12 1z" fill="#6c6c6c" /></Icon>
    </div>
  );
}

function TableToolbar() {
  const sep = <div className="mx-[3px] h-[26px] w-px bg-[#bdbab6]" />;
  return (
    <div className="flex h-8 shrink-0 items-center bg-gradient-to-b from-[#dcdad8] to-[#f2f1f0] pr-[9px]">
      <Cell w="w-7"><Icon size={18}><Pencil /></Icon></Cell>
      <Cell w="w-[26px]"><Icon size={18}><Disk grey /><g transform="translate(9 8) scale(.7)"><Pencil grey /></g></Icon></Cell>
      {sep}
      <Cell w="w-[26px]"><Icon size={18}><Trash /></Icon></Cell>
      {sep}
      <Cell w="w-[29px]"><Icon size={18}><Epsilon /></Icon></Cell>
      <Cell w="w-[26px]"><Icon size={18}><rect x="2" y="3" width="14" height="14" fill="#fbe74c" stroke="#b69a1c" /><NoSign /></Icon></Cell>
      <Cell w="w-[26px]"><Icon size={18}><TableShape c="#92a9b7" h="#b9d1e0" /><path d="M3 17h18v4.500H3z" fill="#fbe74c" stroke="#b69a1c" /><path d="M12 15V8H9l3-3.500L15 8h-3" fill="#45749c" stroke="#45749c" strokeWidth="2" /></Icon></Cell>
      <Cell w="w-[27px]"><Icon size={18}><path d="M1 4h20v19H1z" fill="#f3df56" /><path d="M3 9C6-1 15 1 18 5l4-3v10h-9l3-3c-3-3-6-2-7 1zM21 14c-1 10-12 11-15 6l-4 3V13h9l-3 3c3 3 6 2 7-1z" fill="#69a56f" stroke="#487e54" /></Icon></Cell>
      <Cell w="w-[27px]"><Icon size={18}><rect x="1.500" y=".5" width="14.500" height="11" fill="#f8e44f" /><path d="M1 .8h15.500M1.300 1v11" stroke="#222" strokeWidth="1.700" strokeDasharray="2.500 1.500" /><Arrows /></Icon></Cell>
      <Cell w="w-[27px]"><Icon size={18}><path d="M1 2h13v14H1z" fill="#f8e44f" /><path d="M1 2h13M1.500 1v14" stroke="#222" strokeWidth="1.500" strokeDasharray="2.500 1.500" /><Lens fill="#e9e4c5" /></Icon></Cell>
      <Cell w="w-[27px]"><Icon size={18}><path d="M9.500 3.500h7l3.500 3.500v11H9.500z" fill="#f6e783" stroke="#c1ad42" /><path d="M3.500 6.500h7l3.500 3.500v12H3.500z" fill="#f7f7f7" stroke="#999" /><path d="M5.500 12h6.500M5.500 15h6.500M5.500 18h6.500" stroke="#888" strokeWidth="1.300" /></Icon></Cell>
      {sep}
      <Cell w="w-[27px]"><Icon size={18}><TableShape c="#92a9b7" h="#b9d1e0" /><path d="M7 3h5v18H7z" fill="#fbe74c" stroke="#b69a1c" /><rect x="13" y="14" width="10" height="10" rx="1" fill="#d35452" /><path d="m15.500 16.500 5 5m0-5-5 5" stroke="#fff" strokeWidth="1.600" /></Icon></Cell>
      <Cell w="w-[27px]"><Icon size={18}><TableShape c="#bbb" h="#ccc" /><path d="M8 3h5v18H8z" fill="#ddd" stroke="#aaa" /><Star c="#aaa" /></Icon></Cell>
      <Cell w="w-[26px]"><Icon size={18}><Abacus /></Icon></Cell>
      <span className="ml-auto">?</span>
    </div>
  );
}

const heads = ["INSEE", "Nom", "Ouverture", "Fermeture", "Type", "Altitude", "Latitude", "Longitude", "LambX", "LambY", "Bassin"];
const rightCols = [0, 4, 5, 8, 9];
const rows: [string, string[]][] = [
  ["101", ["98825002", "POUEMBOUT (…", "1992/01/01", "NULL", "4", "1001", "21°09'54'' S", "165°00'54'' E", "2977", "3366", "NR", "METEO-FRA"]],
  ["106", ["98827001", "POYA", "1952/01/01", "NULL", "2", "10", "21°20'42'' S", "165°09'18'' E", "3125", "3169", "NR", "METEO-FRA"]],
  ["107", ["98827002", "POYA (NEPOUI)", "1970/01/01", "NULL", "2", "79", "21°19'00'' S", "165°00'06'' E", "2965", "3198", "NR", "METEO-FRA"]],
];

function AttributeTable() {
  return (
    <div className="flex h-[92px] shrink-0 flex-col overflow-hidden border border-[#bdbab6] bg-white">
      <div className="flex h-[22px] shrink-0 border-b border-[#a9a6a2] bg-gradient-to-b from-white to-[#efedec]">
        <div className="w-[30px] shrink-0 border-r border-[#cfccc9]" />
        {heads.map((h, i) => (
          <div key={h} className="relative flex w-[100px] shrink-0 items-center justify-center border-r border-[#cfccc9] pt-[3px]">
            <span className={i ? "" : "pr-[18px]"}>{h}</span>
            {i === 0 && <span className="absolute right-[9px] pb-1"><svg width="8" height="6"><path d="M0 5.500h8L4 0z" fill="#777" /></svg></span>}
          </div>
        ))}
        <div className="flex flex-1 items-center pt-[3px] pl-[19px] tracking-[-0.2px]">Producte</div>
      </div>
      {rows.map(([n, cells]) => (
        <div key={n} className="flex h-5 shrink-0">
          <div className="flex w-[30px] shrink-0 items-center justify-center border-r border-b border-[#bdbab6] bg-gradient-to-b from-white to-[#efedec] pt-[3px]">{n}</div>
          {cells.map((c, i) => (
            <div key={i} className={`h-5 shrink-0 overflow-hidden border-b border-[#cdc9c4] bg-[#8aa853] px-[3px] leading-[18px] tracking-[-0.1px] whitespace-nowrap text-white ${i === 11 ? "w-[69px] pr-0" : "w-[100px] border-r"} ${rightCols.includes(i) ? "text-right" : ""} ${i === 3 ? "italic" : ""}`}>{c}</div>
          ))}
        </div>
      ))}
      <div className="h-2 w-[30px] bg-[#f2f1f0]" />
    </div>
  );
}

export default function App() {
  return (
    <div className="flex h-[787px] w-[1201px] flex-col overflow-hidden bg-[#f2f1f0] font-['Noto_Sans','Open_Sans',sans-serif] text-[12px] leading-4 text-[#4c4c4c]">
      <div className="flex h-7 shrink-0 items-center gap-[10px] rounded-t-md bg-gradient-to-b from-[#5b574e] to-[#3d3c37] pl-2">
        <WinButtons />
        <b className="pt-[2px] tracking-[-0.2px] text-[#dfdbd2]">QGIS 2.8.3-Wien - Meteo_France</b>
      </div>
      <MainToolbar />
      <EditToolbar />
      <div className="flex h-[452px] shrink-0 pt-px">
        <SideToolbar />
        <LayersPanel />
        <div className="flex w-[7px] shrink-0 items-center justify-center border-r border-[#c4c1bd]"><Grip /></div>
        <MapCanvas />
      </div>
      <StatusBar />
      <div className="flex h-[27px] shrink-0 items-center gap-[10px] rounded-t-md bg-gradient-to-b from-[#1f1e1c] to-[#373531] pl-[7px]">
        <WinButtons dim />
        <b className="tracking-[-0.18px] text-[#65625c]">Attribute table - stations_meteo :: Features total: 130, filtered: 3, selected: 3</b>
      </div>
      <TableToolbar />
      <AttributeTable />
      <div className="mt-[3px] flex h-[13px] shrink-0 items-center rounded-full border border-[#a9a6a2] bg-[#dedcda] pr-1">
        <span className="flex w-3 justify-center"><svg width="3" height="5"><path d="M3 0v5L0 2.500z" fill="#aaa" /></svg></span>
        <div className="flex h-[13px] w-[807px] items-center justify-center rounded-full border border-[#97948f] bg-gradient-to-b from-white to-[#eae8e6]">
          <svg width="8" height="4"><path d="M.5 0v4M3.500 0v4M6.500 0v4" stroke="#999" /></svg>
        </div>
        <span className="ml-auto"><svg width="3" height="5"><path d="M0 0v5l3-2.500z" fill="#666" /></svg></span>
      </div>
      <div className="flex flex-1 items-center justify-between pr-[5px] pl-1">
        <button className="flex h-[21px] w-[261px] items-center rounded border border-[#a9a6a2] bg-gradient-to-b from-white to-[#f0efed] pl-1 whitespace-nowrap">
          <Icon size={14}><path d="M1 1h22v22H1z" fill="#888" /><path d="M6 2h12l-2 8v13H9V10z" fill="#f5f5f5" stroke="#bbb" /></Icon>
          <span className="ml-[5px] w-[225px] text-left tracking-[-0.19px]">Ne montrer que les entités sélectionnées</span>
          <span className="mt-[7px]"><Down /></span>
        </button>
        <div className="flex gap-[2px]">
          <span className="flex h-[22px] w-5 items-center justify-center rounded border border-[#aaa7a3] bg-white"><Icon size={16}><path d="M1 2h22v20H1z" fill="#fff" stroke="#2865bc" strokeWidth="1.500" /><path d="M1 2h22v4H1z" fill="#1b59d1" /><path d="M10 11h10M10 17h10" stroke="#111" strokeWidth="2.500" /><path d="M5 11h3M5 17h3" stroke="#4c8ce8" strokeWidth="2.500" /></Icon></span>
          <span className="flex h-[22px] w-5 items-center justify-center rounded border border-[#95928d] bg-[#d8d5d2]"><Icon size={16}><TableShape c="#62798a" h="#7d9db3" /></Icon></span>
        </div>
      </div>
    </div>
  );
}
